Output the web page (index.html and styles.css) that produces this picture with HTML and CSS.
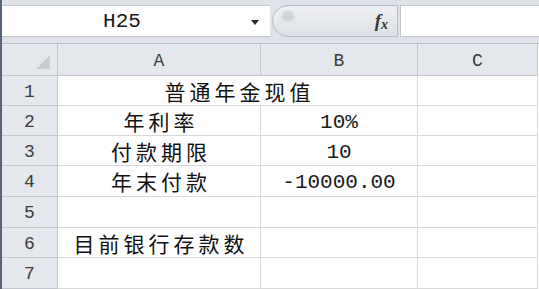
FILE: index.html
```html
<!DOCTYPE html>
<html lang="zh">
<head>
    <meta charset="UTF-8">
    <title>普通年金现值</title>
    <link rel="stylesheet" href="styles.css">
</head>
<body>
<div class="app">
    <div class="formula-bar">
        <div class="name-box">
            <span class="cell-ref">H25</span>
            <span class="drop"></span>
        </div>
        <div class="fx-box">
            <span class="knob"></span>
            <span class="fx"><i>f</i><sub>x</sub></span>
        </div>
        <div class="input"></div>
    </div>
    <div class="sheet">
        <div class="hd corner"><span class="tri"></span></div>
        <div class="hd col">A</div>
        <div class="hd col">B</div>
        <div class="hd col">C</div>

        <div class="hd num">1</div>
        <div class="cell cjk merged">普通年金现值</div>
        <div class="cell"></div>

        <div class="hd num">2</div>
        <div class="cell cjk">年利率</div>
        <div class="cell val">10%</div>
        <div class="cell"></div>

        <div class="hd num">3</div>
        <div class="cell cjk">付款期限</div>
        <div class="cell val">10</div>
        <div class="cell"></div>

        <div class="hd num">4</div>
        <div class="cell cjk">年末付款</div>
        <div class="cell val">-10000.00</div>
        <div class="cell"></div>

        <div class="hd num">5</div>
        <div class="cell"></div>
        <div class="cell"></div>
        <div class="cell"></div>

        <div class="hd num">6</div>
        <div class="cell cjk">目前银行存款数</div>
        <div class="cell"></div>
        <div class="cell"></div>

        <div class="hd num">7</div>
        <div class="cell"></div>
        <div class="cell"></div>
        <div class="cell"></div>
    </div>
</div>
</body>
</html>
```

FILE: styles.css
```css
body,html{
    margin: 0;
    padding: 0;
    background-color: #fff;
    overflow: hidden;
}
.app{
    width: 537px;
    height: 289px;
    border-left: 2px solid #56647a;
    font-family: "Liberation Mono", "Noto Sans CJK SC", monospace;
    color: #1a1a1a;
}
.formula-bar{
    display: flex;
    height: 32px;
    padding: 5px 0 6px;
    background-color: #dfe3e9;
    border-bottom: 1px solid #b9bec6;
}
.name-box{
    width: 268px;
    display: flex;
    align-items: center;
    justify-content: center;
    position: relative;
    background-color: #fff;
    border-top: 1px solid #c2c7cf;
    border-bottom: 1px solid #c2c7cf;
}
.cell-ref{
    font-size: 21px;
    margin-left: -28px;
}
.drop{
    position: absolute;
    right: 11px;
    top: 14px;
    border-left: 4px solid transparent;
    border-right: 4px solid transparent;
    border-top: 5px solid #2b2b2b;
}
.fx-box{
    width: 126px;
    margin-left: 2px;
    display: flex;
    align-items: center;
    justify-content: space-between;
    padding: 0 9px 0 8px;
    box-sizing: border-box;
    border: 1px solid #b7bcc4;
    border-radius: 17px 0 0 17px;
    background: linear-gradient(#eef0f3, #dde1e6);
}
.knob{
    width: 14px;
    height: 12px;
    border-radius: 50%;
    margin-top: -10px;
    background: radial-gradient(#c9cdd3, #dfe2e6);
}
.fx{
    font-family: "Liberation Serif", serif;
    font-weight: bold;
    font-size: 19px;
    color: #3a3a3a;
}
.fx sub{
    font-size: 14px;
    font-style: italic;
    vertical-align: -2px;
}
.input{
    flex: 1;
    margin-left: 2px;
    background-color: #fff;
    border: 1px solid #c2c7cf;
    border-right: none;
}
.sheet{
    display: grid;
    grid-template-columns: 56px 203px 157px 120px;
    grid-template-rows: 32px 30px 30px 30px 31px 31px 30px 31px;
}
.hd{
    background-color: #e4e7ec;
    border-right: 1px solid #c3c7cd;
    border-bottom: 1px solid #c3c7cd;
    display: flex;
    align-items: center;
    justify-content: center;
    font-size: 18px;
    color: #3b3b3b;
}
.col{
    padding-top: 3px;
}
.corner{
    position: relative;
}
.tri{
    position: absolute;
    right: 7px;
    bottom: 6px;
    border-left: 14px solid transparent;
    border-bottom: 14px solid #c8ccd2;
}
.num{
    padding-top: 2px;
}
.cell{
    border-right: 1px solid #dadada;
    border-bottom: 1px solid #dadada;
    display: flex;
    align-items: center;
    justify-content: center;
    white-space: nowrap;
    overflow: hidden;
}
.cjk{
    font-family: "Noto Sans CJK SC", sans-serif;
    font-size: 21px;
    letter-spacing: 4px;
    padding-left: 4px;
    color: #111;
}
.merged{
    grid-column: span 2;
}
.val{
    font-size: 21px;
    padding-top: 3px;
}
```
